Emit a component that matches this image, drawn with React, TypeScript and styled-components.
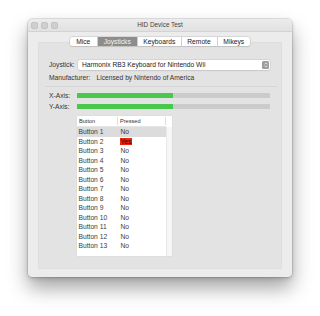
import React from "react";
import styled, { createGlobalStyle } from "styled-components";

const GlobalStyle = createGlobalStyle`
  html, body {
    margin: 0;
    padding: 0;
    background: #ffffff;
  }
  body {
    font-family: "Liberation Sans", Arial, sans-serif;
    font-size: 6.7px;
    color: #333;
  }
`;

const Page = styled.div`
  width: 320px;
  height: 316px;
  padding: 19px 0 0 28px;
  box-sizing: border-box;
`;

const Window = styled.div`
  width: 264px;
  height: 258px;
  background: #ececec;
  border-radius: 4px;
  box-shadow: 0 0 0 0.5px rgba(0, 0, 0, 0.2), 0 11px 20px rgba(0, 0, 0, 0.36),
    0 2px 4px rgba(0, 0, 0, 0.14);
  display: flex;
  flex-direction: column;
  overflow: hidden;
`;

const TitleBar = styled.div`
  position: relative;
  height: 11.5px;
  background: linear-gradient(#ececec, #e1e1e1);
  border-bottom: 1px solid #d3d3d3;
  display: flex;
  align-items: center;
  justify-content: center;
  flex-shrink: 0;
`;

const Lights = styled.div`
  position: absolute;
  left: 3px;
  top: 3px;
  display: flex;
  gap: 3.5px;
`;

const Light = styled.span`
  width: 6.5px;
  height: 6.5px;
  border-radius: 50%;
  background: #cfcfcf;
  box-shadow: inset 0 0 0 0.5px #b9b9b9;
`;

const Title = styled.div`
  font-size: 6.4px;
  color: #444;
`;

const Body = styled.div`
  flex: 1;
  display: flex;
  flex-direction: column;
  padding: 5.5px 10px 8px;
`;

const Tabs = styled.div`
  align-self: center;
  display: flex;
  height: 9px;
  margin-bottom: -4.5px;
  position: relative;
  z-index: 1;
  background: #fff;
  border-radius: 2px;
  box-shadow: 0 0 0 0.5px #c4c4c4, 0 0.5px 1px rgba(0, 0, 0, 0.15);
`;

const Tab = styled.div<{ $active?: boolean; $w: number }>`
  width: ${(p) => p.$w}px;
  display: flex;
  align-items: center;
  justify-content: center;
  color: ${(p) => (p.$active ? "#f4f4f4" : "#222")};
  background: ${(p) => (p.$active ? "#8d8d8d" : "transparent")};
  border-left: 0.5px solid #d0d0d0;
  &:first-child {
    border-left: none;
    border-radius: 2px 0 0 2px;
  }
  &:last-child {
    border-radius: 0 2px 2px 0;
  }
`;

const Panel = styled.div`
  flex: 1;
  background: #e3e3e3;
  border-radius: 2px;
  box-shadow: inset 0 0 0 0.5px #d8d8d8;
  padding: 18px 12px 0 11px;
  display: flex;
  flex-direction: column;
`;

const Row = styled.div`
  display: flex;
  align-items: center;
`;

const Label = styled.div<{ $w: number }>`
  width: ${(p) => p.$w}px;
  flex-shrink: 0;
  color: #333;
`;

const Popup = styled.div`
  flex: 1;
  height: 10.5px;
  background: #fff;
  border-radius: 2px;
  box-shadow: 0 0 0 0.5px #c9c9c9, 0 0.5px 1px rgba(0, 0, 0, 0.12);
  display: flex;
  align-items: center;
  padding-left: 4px;
  color: #222;
`;

const PopupText = styled.span`
  flex: 1;
`;

const Stepper = styled.div`
  width: 7px;
  height: 8.5px;
  margin-right: 1px;
  border-radius: 1.5px;
  background: #9d9d9d;
  display: flex;
  align-items: center;
  justify-content: center;
`;

const InfoRow = styled(Row)`
  margin-top: 3px;
  height: 9.5px;
`;

const Separator = styled.div`
  height: 1px;
  background: #d6d6d6;
  margin: 3px -7px 6px -4px;
`;

const AxisRow = styled(Row)`
  height: 5.5px;
  margin-bottom: 5.5px;
`;

const Track = styled.div`
  flex: 1;
  height: 5.5px;
  background: #cbcbcb;
  border-radius: 0.5px;
  overflow: hidden;
`;

const Fill = styled.div`
  height: 100%;
  background: #4ac84d;
`;

const Table = styled.div`
  margin: 1px 0 0 27.5px;
  width: 95.5px;
  height: 140.5px;
  background: #fff;
  display: flex;
  box-shadow: 0 0 0 0.5px #d9d9d9;
`;

const TableMain = styled.div`
  flex: 1;
  display: flex;
  flex-direction: column;
`;

const Header = styled.div`
  height: 10.5px;
  display: flex;
  align-items: center;
  border-bottom: 1px solid #e6e6e6;
  font-size: 5.6px;
  color: #333;
`;

const HeadCell = styled.div<{ $w: number }>`
  width: ${(p) => p.$w}px;
  padding-left: 2.5px;
  box-sizing: border-box;
  border-right: 0.5px solid #dedede;
  line-height: 8px;
`;

const TRow = styled.div<{ $selected?: boolean }>`
  height: 9.5px;
  display: flex;
  align-items: center;
  background: ${(p) => (p.$selected ? "#dcdcdc" : "transparent")};
  color: #3a3a3a;
`;

const Cell = styled.div<{ $w: number }>`
  width: ${(p) => p.$w}px;
  padding-left: 2px;
  box-sizing: border-box;
`;

const Pressed = styled.span<{ $on?: boolean }>`
  display: inline-block;
  line-height: 7.5px;
  background: ${(p) => (p.$on ? "#e8260f" : "transparent")};
  color: ${(p) => (p.$on ? "#2a0604" : "#3a3a3a")};
  padding: ${(p) => (p.$on ? "0 1px" : "0")};
  margin-left: ${(p) => (p.$on ? "-1px" : "0")};
`;

const ScrollCol = styled.div`
  width: 6.5px;
  display: flex;
  flex-direction: column;
`;

const ScrollHead = styled.div`
  height: 11.5px;
  background: #fff;
`;

const ScrollTrack = styled.div`
  flex: 1;
  background: #f6f6f6;
  border-left: 0.5px solid #e8e8e8;
`;

const tabs = [
  { name: "Mice", w: 26.5 },
  { name: "Joysticks", w: 39.5, active: true },
  { name: "Keyboards", w: 42.5 },
  { name: "Remote", w: 35 },
  { name: "Mikeys", w: 32.5 },
];

const buttons = Array.from({ length: 13 }, (_, i) => ({
  name: `Button ${i + 1}`,
  pressed: i === 1,
}));

export default function App() {
  return (
    <Page>
      <GlobalStyle />
      <Window>
        <TitleBar>
          <Lights>
            <Light />
            <Light />
            <Light />
          </Lights>
          <Title>HID Device Test</Title>
        </TitleBar>
        <Body>
          <Tabs>
            {tabs.map((t) => (
              <Tab key={t.name} $w={t.w} $active={t.active}>
                {t.name}
              </Tab>
            ))}
          </Tabs>
          <Panel>
            <Row>
              <Label $w={29}>Joystick:</Label>
              <Popup>
                <PopupText>Harmonix RB3 Keyboard for Nintendo Wii</PopupText>
                <Stepper>
                  <svg width="4" height="6" viewBox="0 0 4 6">
                    <path d="M0.6 2.3 L2 0.9 L3.4 2.3" fill="none" stroke="#fff" strokeWidth="0.7" />
                    <path d="M0.6 3.7 L2 5.1 L3.4 3.7" fill="none" stroke="#fff" strokeWidth="0.7" />
                  </svg>
                </Stepper>
              </Popup>
            </Row>
            <InfoRow>
              <Label $w={47.5}>Manufacturer:</Label>
              <span>Licensed by Nintendo of America</span>
            </InfoRow>
            <Separator />
            <AxisRow>
              <Label $w={27.5}>X-Axis:</Label>
              <Track>
                <Fill style={{ width: "50%" }} />
              </Track>
            </AxisRow>
            <AxisRow>
              <Label $w={27.5}>Y-Axis:</Label>
              <Track>
                <Fill style={{ width: "50%" }} />
              </Track>
            </AxisRow>
            <Table>
              <TableMain>
                <Header>
                  <HeadCell $w={41}>Button</HeadCell>
                  <HeadCell $w={48}>Pressed</HeadCell>
                </Header>
                {buttons.map((b, i) => (
                  <TRow key={b.name} $selected={i === 0}>
                    <Cell $w={42}>{b.name}</Cell>
                    <Cell $w={40}>
                      <Pressed $on={b.pressed}>{b.pressed ? "Yes" : "No"}</Pressed>
                    </Cell>
                  </TRow>
                ))}
              </TableMain>
              <ScrollCol>
                <ScrollHead />
                <ScrollTrack />
              </ScrollCol>
            </Table>
          </Panel>
        </Body>
      </Window>
    </Page>
  );
}
